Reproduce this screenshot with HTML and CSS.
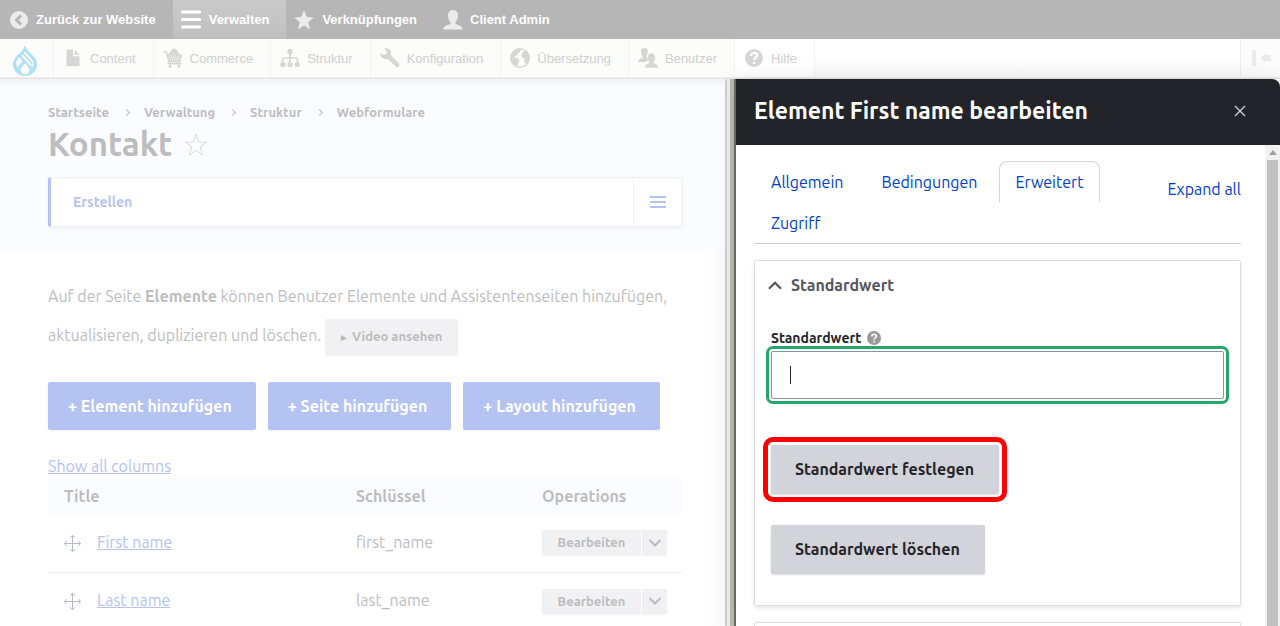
FILE: index.html
```html
<!DOCTYPE html>
<html lang="de">
<head>
<meta charset="utf-8">
<title>Kontakt</title>
<link rel="stylesheet" href="styles.css">
</head>
<body>
<svg class="defs" width="0" height="0" aria-hidden="true">
  <symbol id="move" viewBox="0 0 17 17"><path d="M8.500.5v16M.5 8.500h16M6 2.500l2.500-2 2.500 2M6 14.500l2.500 2 2.500-2M2.500 6l-2 2.500 2 2.500M14.500 6l2 2.500-2 2.500" fill="none" stroke="currentColor"/></symbol>
  <symbol id="chevron" viewBox="0 0 14 10"><path d="m1.500 2 5.500 5.500L12.500 2" fill="none" stroke="currentColor" stroke-width="2"/></symbol>
  <symbol id="person" viewBox="0 0 20 20"><path d="M10 0C6.800 0 5 2.200 5 5.500c0 3 1.200 5.500 2.600 6.500 0 1.500-.3 2-1.600 2.500C3 15.500.5 16.500.5 19.500h19c0-3-2.500-4-5.500-5-1.300-.5-1.600-1-1.600-2.500C13.800 11 15 8.500 15 5.500 15 2.200 13.200 0 10 0Z" fill="currentColor"/></symbol>
</svg>
<header>
  <nav class="bar" aria-label="Werkzeugleiste">
    <a href="#" class="bar-item bar-back"><svg viewBox="0 0 20 20"><circle cx="10" cy="10" r="9" fill="currentColor"/><path d="m12 5.500-4.500 4.500 4.500 4.500" fill="none" stroke="#b6b6b6" stroke-width="2.800"/></svg>Zurück zur Website</a>
    <a href="#" class="bar-item bar-active"><svg viewBox="0 0 20 20"><path d="M1.500 2h17M1.500 9.500h17M1.500 17h17" stroke="#fff" stroke-width="3.200" stroke-linecap="round"/></svg>Verwalten</a>
    <a href="#" class="bar-item"><svg viewBox="0 0 20 20"><path d="m10 0 2.700 6.900 7.100.5-5.500 4.600 1.900 7.400-6.200-4-6.200 4 1.900-7.400L.2 7.400l7.100-.5Z" fill="currentColor"/></svg>Verknüpfungen</a>
    <a href="#" class="bar-item bar-user"><svg viewBox="0 0 20 20"><use href="#person"/></svg>Client Admin</a>
  </nav>
  <nav class="tray" aria-label="Verwaltung">
    <a href="#" class="logo" aria-label="Drupal"><svg viewBox="0 0 24 31"><path d="M12 0c-1 4.200-3.600 6.300-6.400 9.200C2.600 12.200 0 14.900 0 19.200 0 25.800 5.300 31 12 31s12-5.200 12-11.800c0-4.300-2.600-7-5.600-10C15.600 6.300 13 4.200 12 0Z" fill="#b0e1f8"/><path d="m6.300 12.300 3.500 3.600-5.600 6.300c-2-3.900-.8-7 2.100-9.900Z" fill="#fcfcfa"/><path d="m9.200 10.200 9.300 10.200" fill="none" stroke="#fcfcfa" stroke-width="2.200"/><path d="M12 6.500c2 3 4.500 4.800 6.500 7.200 2.400 2.900 2.500 5.700 1.200 8.500-1.200-2.700-6-6.900-8.500-9.500l-1-4Z" fill="#fcfcfa"/><path d="M10 8.500c3 3.500 6.700 6.800 9.200 10.500" fill="none" stroke="#b0e1f8" stroke-width="1.600"/><path d="M12 18.200c2.300 2.200 4.400 4.600 4.400 6.700a4.400 4.400 0 0 1-8.800 0c0-2.100 2.100-4.500 4.400-6.700Z" fill="#fcfcfa"/></svg></a>
    <a href="#" class="tray-item"><svg viewBox="0 0 20 20"><path d="M3.500 1.500H10v6.700h6.500v10h-13ZM11.500 1.500l5 5.300h-5Z" fill="currentColor"/></svg>Content</a>
    <a href="#" class="tray-item"><svg viewBox="0 0 20 21"><path d="M0 4.300h3l2.600 10.200h12" fill="none" stroke="currentColor" stroke-width="1.600"/><path d="M6 6C7.500 3 10 1 11 0c1.500 1.500 4.500 3 5 6l3.500 1-1.500 7H6L4 6.500Z" fill="currentColor"/><path d="M6 8.500h12M6.500 10.500h11.500M7 12.500h10" stroke="#fcfcfa" stroke-width="1" stroke-dasharray="1 1"/><path d="M4 16.500h15" stroke="currentColor" stroke-width="1.600"/><circle cx="7" cy="19.200" r="1.600" fill="currentColor"/><circle cx="16" cy="19.200" r="1.600" fill="currentColor"/></svg>Commerce</a>
    <a href="#" class="tray-item"><svg viewBox="0 0 20 20"><path d="M10 4v12M2.500 15v-3.500q0-1.500 1.500-1.500h12q1.500 0 1.500 1.500V15" fill="none" stroke="currentColor" stroke-width="1.700"/><g fill="currentColor"><circle cx="10" cy="3.500" r="2.700"/><circle cx="2.800" cy="16.500" r="2.600"/><circle cx="10" cy="16.500" r="2.600"/><circle cx="17.200" cy="16.500" r="2.600"/></g></svg>Struktur</a>
    <a href="#" class="tray-item"><svg viewBox="0 0 20 20"><path d="M4 .7C6.500-.2 9 .5 10.300 2.500c1 1.600 1 3.200.6 4.700l8 8.400c1.900 2-.9 5-3 3.200L7.600 10.700C4 11.600.9 10 .4 6.500L.5 4.500 3 7l3-.8.7-2.800Z" fill="currentColor"/></svg>Konfiguration</a>
    <a href="#" class="tray-item"><svg viewBox="0 0 20 20"><circle cx="10" cy="10" r="9.200" fill="#fcfcfa" stroke="currentColor" stroke-width="1.600"/><path d="M2 6C3.500 3 6 1.200 9 1l2 1-1 2-2.500 1L8 6.500 5.500 8 4 9.500l3 .5 2.500 2-1.200 2.500L7 18c-3.500-1.500-5.500-4.500-6-7.500ZM12 5l3-2.500c3 2 4.300 4.500 4.300 7.500L18 14.500 15.500 16 14 13l.5-2.500L12 9.500l-.5-2.500Z" fill="currentColor"/></svg>Übersetzung</a>
    <a href="#" class="tray-item"><svg viewBox="0 0 20 20"><path d="M6.500 0C4 0 3 1.500 3 4c0 2 .8 3.500 1.700 4.300 0 1.200-.2 1.600-1.200 2C1.500 11 0 11.600 0 14h7.500c.7-.9 1.800-1.300 3-1.700C9 10.500 8.500 8 9.200 5.500 9.700 4.700 10 4.500 10 4c0-2.500-1-4-3.500-4Z" fill="currentColor"/><path d="M13.500 5.200c-2.400 0-3.600 1.600-3.600 4.200 0 2 .8 3.600 1.800 4.400 0 1.100-.2 1.400-1.200 1.800-2 .7-3.800 1.400-3.800 4.200H20c0-2.800-1.700-3.500-3.600-4.200-1-.4-1.200-.7-1.200-1.800 1-.8 1.900-2.400 1.900-4.400 0-2.600-1.200-4.200-3.600-4.200Z" fill="currentColor"/></svg>Benutzer</a>
    <a href="#" class="tray-item tray-help"><svg viewBox="0 0 20 20"><circle cx="10" cy="10" r="9" fill="currentColor"/><path d="M7 8c0-4 6.200-4 6.200-.7 0 2.200-3 2.200-3 4.700M10.200 13.700v2.300" fill="none" stroke="#fff" stroke-width="2.200"/></svg>Hilfe</a>
    <button class="orient" aria-label="Vertikale Ausrichtung"><svg viewBox="0 0 20 16"><path d="M1 0h4v16H1ZM9 8l5-4.500V5h6v6h-6v1.500Z" fill="currentColor"/></svg></button>
  </nav>
</header>
<div class="workspace">
  <main class="page">
    <div class="page-head">
      <nav class="crumbs" aria-label="Pfadnavigation"><a href="#">Startseite</a><i></i><a href="#">Verwaltung</a><i></i><a href="#">Struktur</a><i></i><a href="#">Webformulare</a></nav>
      <div class="title-row"><h1>Kontakt</h1><svg class="fav" viewBox="0 0 24 24"><path d="m12 1.500 2.600 7.600h8L16.200 14l2.400 8-6.600-4.800L5.400 22l2.400-8L1.400 9.100h8Z" fill="none" stroke="currentColor"/></svg></div>
      <div class="tabs"><a href="#">Erstellen</a><button aria-label="Tabs"><svg viewBox="0 0 16 12"><path d="M0 1h16M0 6h16M0 11h16" stroke="currentColor" stroke-width="2"/></svg></button></div>
    </div>
    <div class="page-body">
      <p class="intro">Auf der Seite <strong>Elemente</strong> können Benutzer Elemente und Assistentenseiten hinzufügen, aktualisieren, duplizieren und löschen. <a href="#" class="video"><span>▸</span> Video ansehen</a></p>
      <div class="actions"><a href="#">+ Element hinzufügen</a><a href="#">+ Seite hinzufügen</a><a href="#">+ Layout hinzufügen</a></div>
      <a href="#" class="show-all">Show all columns</a>
      <table>
        <thead><tr><th class="c-title">Title</th><th class="c-key">Schlüssel</th><th>Operations</th></tr></thead>
        <tbody>
          <tr><td><div class="name"><svg><use href="#move"/></svg><a href="#">First name</a></div></td><td>first_name</td><td><div class="drop"><a href="#">Bearbeiten</a><button aria-label="Weitere Aktionen"><svg><use href="#chevron"/></svg></button></div></td></tr>
          <tr><td><div class="name"><svg><use href="#move"/></svg><a href="#">Last name</a></div></td><td>last_name</td><td><div class="drop"><a href="#">Bearbeiten</a><button aria-label="Weitere Aktionen"><svg><use href="#chevron"/></svg></button></div></td></tr>
        </tbody>
      </table>
    </div>
  </main>
  <div class="resizer"></div>
  <section class="dialog" role="dialog" aria-labelledby="dlg">
    <header class="dialog-head"><h2 id="dlg">Element First name bearbeiten</h2><button aria-label="Schließen"><svg viewBox="0 0 14 14"><path d="m2 2 10 10M12 2 2 12" stroke="currentColor" stroke-width="1.300"/></svg></button></header>
    <div class="dialog-main">
      <div class="dialog-body">
        <div class="tab-row">
          <nav class="form-tabs" aria-label="Formular"><a href="#">Allgemein</a><a href="#">Bedingungen</a><a href="#" class="on">Erweitert</a><a href="#">Zugriff</a></nav>
          <a href="#" class="expand">Expand all</a>
        </div>
        <div class="panel">
          <h3><svg><use href="#chevron"/></svg>Standardwert</h3>
          <div class="label-row"><label for="dv">Standardwert</label><svg viewBox="0 0 14 14"><circle cx="7" cy="7" r="7" fill="#999"/><path d="M4.800 5.500c0-3 4.600-3 4.600-.4C9.400 6.700 7.200 6.800 7.200 8.500M7.200 9.800v1.600" fill="none" stroke="#fff" stroke-width="1.600"/></svg></div>
          <input id="dv" type="text" value="">
          <div class="panel-actions"><button class="marked">Standardwert festlegen</button><button>Standardwert löschen</button></div>
        </div>
        <div class="panel panel-next"></div>
      </div>
      <div class="scroll"><svg viewBox="0 0 8 5"><path d="m0 5 4-5 4 5Z" fill="#a0a0a0"/></svg><div class="thumb"></div></div>
    </div>
  </section>
</div>
</body>
</html>
```
FILE: styles.css
```css
* { box-sizing: border-box; }
body { margin: 0; height: 100vh; overflow: hidden; display: flex; flex-direction: column; font: 16px/24px Ubuntu, "Noto Sans", sans-serif; color: #bdbdbf; background: #fff; }
a { color: #b4c3f1; }
svg { flex: none; display: block; }
button { font: inherit; border: 0; padding: 0; margin: 0; cursor: pointer; }
.defs { position: absolute; }

.bar { display: flex; height: 39px; background: #b6b6b6; font: bold 13px/39px "Liberation Sans", Arial, sans-serif; }
.bar a { display: flex; align-items: center; gap: 8px; padding: 0 17px 0 8px; color: #fff; text-decoration: none; }
.bar svg { width: 20px; height: 20px; color: #ebebeb; }
.bar .bar-back { gap: 7px; padding-left: 9px; }
.bar .bar-active { background: linear-gradient(#cacaca, #bfbfbf); }
.bar .bar-user { gap: 7px; padding-left: 9px; }
.tray { display: flex; height: 39px; background: linear-gradient(#fff 40%, #fafafa); border-bottom: 1px solid #eee; font: 13px/39px "Liberation Sans", Arial, sans-serif; }
.tray a { display: flex; align-items: center; gap: 7px; padding: 0 17px 0 9px; color: #cfcfcf; background: #fcfcfa; border-right: 1px solid #f2f2f2; text-decoration: none; }
.tray svg { width: 20px; height: 20px; color: #d6d6d6; }
.tray .logo { padding: 0 16px 0 13px; }
.tray .logo svg { width: 24px; height: 31px; margin-top: 4px; }
.tray .tray-help { background: #fff; }
.tray .orient { margin-left: auto; width: 40px; background: #fcfcfc; border-left: 1px solid #eee; display: grid; place-items: center; }
.tray .orient svg { height: 16px; color: #ebebeb; }

.workspace { flex: 1; min-height: 0; display: flex; border-top: 1px solid #e4e4e4; }
.page { flex: 1; min-width: 0; overflow: hidden; background: linear-gradient(90deg, #fff 97%, #f9f9f9); }
.page-head { padding: 23px 43px 24px 48px; background: linear-gradient(#f2f3f6, #fbfcff 8px); }
.crumbs { display: flex; align-items: center; gap: 15px; font-size: 13px; line-height: 20px; font-weight: bold; }
.crumbs a { color: inherit; text-decoration: none; }
.crumbs i { width: 5px; height: 5px; border: solid #bdbdbf; border-width: 1px 1px 0 0; transform: rotate(45deg); }
.title-row { display: flex; align-items: center; gap: 12px; }
h1 { margin: 0; font-size: 33px; line-height: 44px; }
.fav { width: 24px; height: 24px; margin-top: 2px; color: #dadadc; }
.tabs { display: flex; height: 50px; margin-top: 11px; background: #fff; border: 1px solid #f0f0f1; border-left: 3px solid #b4c3f1; border-radius: 2px; box-shadow: 0 2px 4px #0000000c; }
.tabs a { flex: 1; padding-left: 22px; font-size: 14px; line-height: 48px; font-weight: bold; text-decoration: none; }
.tabs button { width: 48px; background: #fff; border-left: 1px solid #f0f0f1; color: #b4c3f1; display: grid; place-items: center; }
.tabs svg { width: 16px; height: 12px; }
.page-body { padding: 26px 43px 0 48px; }
.intro { margin: 0; line-height: 39px; }
.video { display: inline-block; padding: 0 16px; border-radius: 2px; background: #f1f1f3; box-shadow: 0 1px 2px #0000000d; color: #bdbdbf; font-size: 13px; line-height: 35px; font-weight: bold; text-decoration: none; }
.video span { margin-right: 2px; font-size: 11px; }
.actions { display: flex; gap: 12px; margin: 27px 0 24px; }
.actions a { padding: 0 24px 0 20px; border-radius: 2px; background: #b4c3f1; box-shadow: 0 1px 2px #0000000d; color: #fff; font-weight: bold; line-height: 48px; text-decoration: none; white-space: nowrap; }
.show-all { display: block; }
table { width: 100%; border-collapse: collapse; text-align: left; table-layout: fixed; }
th { height: 36px; padding: 0 16px; background: #fbfcff; }
td { height: 58px; padding: 0 16px 2px; border-bottom: 1px solid #f0f0f1; }
.c-title { width: 292px; }
.c-key { width: 186px; }
.name { display: flex; gap: 16px; align-items: center; }
.name svg { width: 17px; height: 17px; margin-top: 3px; color: #b8bac8; }
.drop { display: flex; width: 125px; gap: 1px; margin-top: 2px; font-size: 13px; line-height: 25px; font-weight: bold; box-shadow: 0 1px 2px #0000000d; border-radius: 2px; }
.drop a { flex: 1; background: #f1f1f3; color: #bdbdbf; text-align: center; text-decoration: none; }
.drop button { width: 25px; background: #f1f1f3; color: #b8bac8; display: grid; place-items: center; }
.drop svg { width: 14px; height: 10px; }

.resizer { width: 11px; background: linear-gradient(90deg, #d0d0d0 2px, #ededed 2px 5px, #bbbcb4 5px 9px, #6d6d6a 9px); border-top-left-radius: 2px; }
.dialog { width: 544px; display: flex; flex-direction: column; color: #232429; background: #fff; box-shadow: 0 0 20px #0000001a; }
.dialog a { color: #003ecc; text-decoration: none; }
.dialog-head { display: flex; justify-content: space-between; align-items: center; height: 66px; padding: 0 33px 2px 18px; background: #232429; color: #fff; border-top-right-radius: 8px; }
h2 { margin: 0; font-size: 23px; line-height: 30px; }
.dialog-head button { background: none; color: #d4d4d8; }
.dialog-head svg { width: 14px; height: 14px; }
.dialog-main { flex: 1; min-height: 0; display: flex; }
.dialog-body { flex: 1; overflow: hidden; padding: 16px 24px 0 18px; }
.tab-row { display: flex; align-items: flex-start; gap: 32px; border-bottom: 1px solid #cfcfd3; }
.form-tabs { flex: 1; display: flex; flex-wrap: wrap; gap: 0 4px; }
.form-tabs a { padding: 0 16px; line-height: 40px; border: 1px solid transparent; border-bottom: 0; }
.form-tabs .on { border-color: #d3d4d9; border-radius: 8px 8px 0 0; }
.expand { padding-top: 16px; }
.panel { margin-top: 16px; padding: 0 16px 31px; border: 1px solid #dedfe4; border-radius: 2px; box-shadow: 0 2px 4px #0000001a; }
.panel-next { height: 60px; }
h3 { display: flex; align-items: center; gap: 8px; margin: 0 -4px; font-size: 16px; line-height: 48px; color: #55565b; }
h3 svg { width: 16px; height: 11px; transform: rotate(180deg); }
.label-row { display: flex; align-items: center; gap: 6px; margin-top: 17px; font-size: 14px; line-height: 24px; font-weight: bold; }
.label-row svg { width: 14px; height: 14px; }
input { display: block; width: 100%; height: 48px; margin-top: 1px; padding: 0 18px; font: inherit; border: 1px solid #8e929c; border-radius: 2px; outline: 3px solid #26a769; outline-offset: 2px; background: #fff linear-gradient(#232429, #232429) 18px center / 1px 18px no-repeat; }
.panel-actions { display: flex; flex-direction: column; align-items: flex-start; gap: 31px; margin-top: 46px; }
.panel-actions button { padding: 0 25px 0 24px; border-radius: 2px; background: #d3d4d9; color: #232429; font-weight: bold; line-height: 49px; box-shadow: 0 1px 2px #00000026; }
.panel-actions .marked { outline: 5px solid #f00; outline-offset: 3px; }
.scroll { width: 15px; display: flex; flex-direction: column; align-items: center; gap: 5px; padding-top: 5px; background: #f1f1f1; }
.scroll svg { width: 8px; height: 5px; }
.thumb { flex: 1; width: 11px; background: #c1c1c1; }
```
